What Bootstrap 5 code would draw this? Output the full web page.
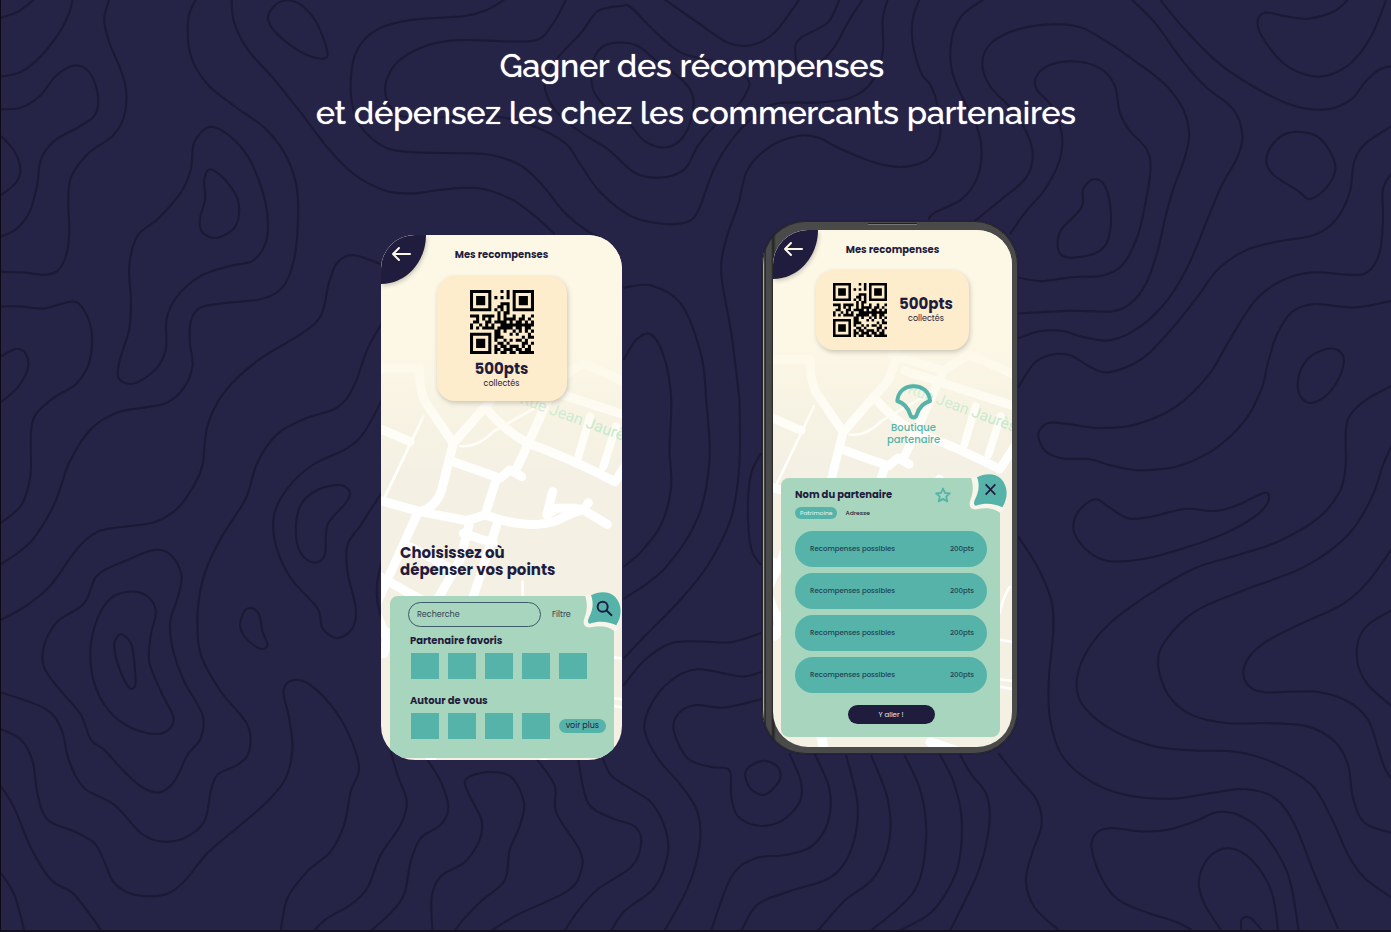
<!DOCTYPE html>
<html lang="fr">
<head>
<meta charset="utf-8">
<meta name="viewport" content="width=device-width, initial-scale=1">
<title>Gagner des récompenses</title>
<link href="https://cdn.jsdelivr.net/npm/bootstrap@5.3.0/dist/css/bootstrap.min.css" rel="stylesheet">
<style>
:root{--navy:#252346;--ink:#1f1c3d;--line:#1b1934;--mint:#a7d5be;--teal:#55b3aa;--cream:#fdf8e6;--sand:#f4f0e3;--peach:#feedcc}
body{font-family:Poppins,Inter,sans-serif;background:var(--navy);color:var(--ink)}
.stage{min-height:100vh;border-left:1px solid #0b0a16;border-bottom:2px solid #11101f;isolation:isolate}
.contours{z-index:-1;fill:none;stroke:var(--line);stroke-width:2px}
.headline{font-family:Raleway,Lato,sans-serif;font-size:32px;line-height:47px;font-weight:500;padding-top:42px;margin-bottom:85px;color:#fff;text-shadow:0 0 1px #fff}
.phones{gap:140px;padding-left:7px}
.phone-plain{width:241px;min-height:525px;border-radius:34px;margin-top:14px}
.phone-frame{width:256px;padding:9px 6px 7px 11px;border-radius:44px;background:linear-gradient(90deg,#111 0,#d8d8d8 1px,#111 3px,#4a4a4a 4px,#4a4a4a 9px,#222 11px,#4a4a4a 14px);box-shadow:inset 0 0 0 1px #26262b,0 0 1px #000}
.phone-frame .phone-screen{min-height:517px;border-radius:35px}
.speaker{top:2px;left:106px;width:49px;height:2px;background:#777;border-top:1px solid #222}
.phone-screen{background:var(--sand);overflow:hidden;isolation:isolate}
.citymap{z-index:-1}
.back-btn{width:45px;height:49px;border:0;border-radius:0 0 100% 0;background:var(--ink);box-shadow:1px 2px 4px #0003;padding:0 0 12px 10px}
.corner-btn svg,.back-btn svg{display:block}
.screen-title{font-size:10px;line-height:16px;font-weight:700;padding:12px 0 8px;margin:0}
.pts-card{background:var(--peach);border-radius:18px;box-shadow:1px 2px 5px #0003}
.pts-tall{padding:14px 33px 11px;margin-top:5px}
.pts-tall svg{margin-bottom:6px}
.pts-wide{padding:13px 16px 13px 17px;gap:12px}
.pts-value{font-size:15px;line-height:18px;font-weight:700}
.pts-note{font-size:8px;line-height:12px}
.pick{font-size:15px;line-height:17px;font-weight:700;margin:0 0 18px 19px}
.panel{background:var(--mint);border-radius:8px}
.panel-a{margin:0 8px 2px 9px;padding:6px 8px 19px 18px;border-radius:8px 8px 0 0}
.panel-b{margin:0 12px 10px 8px;padding:9px 13px 13px 14px}
.corner-btn{top:-6px;right:-9px;width:40px;height:42px;border:0;padding:0;background:none}
.search-row{gap:11px}
.search-box{width:133px;height:25px;border:1px solid #3d5b69;border-radius:13px;background:none;font-size:8px;padding:0 8px;color:var(--ink)}
.search-box::placeholder{color:#33414f;opacity:1}
.mini-link{font-size:8px;line-height:12px;color:#33414f;text-decoration:none}
.sub{font-size:10px;line-height:14px;font-weight:700;margin:0}
.sub-near{padding-left:2px;margin:7px 0 5px}
.sub-far{padding-left:2px;margin:15px 0 5px}
.tiles{gap:9px;padding-left:3px}
.tile{width:28px;height:26px;background:var(--teal)}
.more-btn{border:0;border-radius:8px;background:var(--teal);font-size:8px;line-height:14px;padding:0 7px;color:var(--ink)}
.marker{color:var(--teal);font-size:10px;line-height:12px;font-weight:500;margin:34px 0 0 42px}
.marker svg{margin:0 auto 2px}
.star{margin-right:36px}
.tag{font-size:6px;line-height:12px;border-radius:6px;background:var(--teal);color:#e8f7f0;padding:0 5px}
.addr{font-size:6px;line-height:12px;font-weight:500}
.rewards{gap:6px;margin-top:12px}
.reward{height:36px;border-radius:18px;background:var(--teal);font-size:7px;padding:0 13px 0 15px;color:#1f3f52;font-weight:500}
.go-btn{width:87px;height:19px;border:0;border-radius:10px;background:var(--ink);color:#e9e7f0;font-size:7px;line-height:19px;padding:0;margin-top:12px}
</style>
</head>
<body>
<svg width="0" height="0" class="position-absolute" aria-hidden="true">
  <defs>
    <linearGradient id="fade" x1="0" y1="0" x2="0" y2="1">
      <stop offset="0" stop-color="#fdf8e6"/><stop offset=".2" stop-color="#fdf8e6"/><stop offset=".46" stop-color="#fbf7e4" stop-opacity="0"/>
    </linearGradient>
    <symbol id="city" viewBox="0 0 260 560">
      <g transform="scale(.33333) translate(-33 495)" fill="none" stroke="#fff" stroke-width="27" stroke-linecap="round" stroke-linejoin="round">
        <path d="M20-95H150Q145-40 165 5L250 130L390-30L420-110M20 82L120 125M345 20Q400 90 475 130L560-60M475 130Q600 175 735 245L790 160M475 130L440 205M440-60L780 50M400-110L560-60L640-110L820-30"/>
        <path d="M625 170L660 50M700 200L738 80" stroke-width="24"/>
        <path d="M250 130L215 270Q200 320 150 335L25 300M250 185L390 235L420 210L455 230M380 235L345 345M150 335L290 362L345 345L400 362Q500 385 560 362Q600 340 640 330L712 373M548 275L530 345L560 325H620L640 330L655 308M145 335L20 610M300 365L270 480L190 620M385 362L300 620M120 440L240 505M280 400L370 430M30 530L190 620M20 640L60 740"/>
        <path d="M60 700L40 760M180 1060L200 1160M520 1090L700 1150" stroke-width="30"/>
        <path d="M160 50L45 290M270 138Q320 145 370 95L510 15M458 545V620M735 690Q745 640 765 610M733 772L790 782M733 895L790 903M733 918L790 928" stroke-width="8"/>
      </g>
      <text transform="translate(138 168) rotate(20)" font-family="Roboto,sans-serif" font-size="16" fill="#a9e2c3">Rue Jean Jaurès</text>
      <rect width="260" height="525" fill="url(#fade)"/>
    </symbol>
    <symbol id="arrow" viewBox="0 0 20 16"><path d="M19 8H2M8 2L2 8L8 14" fill="none" stroke="#fdf8e6" stroke-width="2" stroke-linecap="round" stroke-linejoin="round"/></symbol>
    <symbol id="qr" viewBox="0 0 21 21"><path class="qr-cells" fill="#000"/></symbol>
    <symbol id="petal" viewBox="640 30 120 126">
      <path d="M646 46C655 75 652 95 643 118C638 137 650 146 668 141C690 136 715 138 733 152L748 138L664 44Z" fill="#f8f5eb"/>
      <path d="M664 46C688 33 718 33 736 50C758 74 758 106 740 136C715 124 690 121 660 131C652 128 655 118 660 108C670 88 672 66 664 46Z" fill="#55b3aa"/>
    </symbol>
  </defs>
</svg>

<main class="stage position-relative overflow-hidden">
  <svg class="contours position-absolute top-0 start-0 w-100 h-100" viewBox="0 0 1391 932" preserveAspectRatio="xMidYMid slice" aria-hidden="true"></svg>

  <h1 class="headline text-center">Gagner des récompenses&nbsp;<br>et dépensez les chez les commercants partenaires</h1>

  <div class="phones d-flex flex-wrap justify-content-center align-items-start">
    <section class="phone-plain phone-screen position-relative d-flex flex-column">
      <svg class="citymap position-absolute top-0 start-0" width="260" height="560" aria-hidden="true"><use href="#city"/></svg>
      <button class="back-btn position-absolute top-0 start-0" aria-label="Retour"><svg width="20" height="16"><use href="#arrow"/></svg></button>
      <h2 class="screen-title text-center">Mes recompenses</h2>
      <div class="pts-card pts-tall align-self-center text-center">
        <svg width="64" height="64" class="d-block" role="img" aria-label="QR code"><use href="#qr"/></svg>
        <div class="pts-value">500pts</div>
        <div class="pts-note">collectés</div>
      </div>
      <h3 class="pick mt-auto">Choisissez où<br>dépenser vos points</h3>
      <div class="panel panel-a position-relative">
        <button class="corner-btn position-absolute" aria-label="Rechercher"><svg width="40" height="42" viewBox="640 30 120 126"><use href="#petal" x="640" y="30" width="120" height="126"/><g fill="none" stroke="#1f1c3d" stroke-width="6"><circle cx="699" cy="80" r="15"/><path d="M710 91L727 107"/></g></svg></button>
        <div class="search-row d-flex align-items-center">
          <input class="search-box" type="search" placeholder="Recherche" aria-label="Recherche">
          <a class="mini-link" href="#filtre">Filtre</a>
        </div>
        <h4 class="sub sub-near">Partenaire favoris</h4>
        <div class="tiles d-flex"><div class="tile"></div><div class="tile"></div><div class="tile"></div><div class="tile"></div><div class="tile"></div></div>
        <h4 class="sub sub-far">Autour de vous</h4>
        <div class="tiles d-flex align-items-center"><div class="tile"></div><div class="tile"></div><div class="tile"></div><div class="tile"></div><button class="more-btn text-nowrap">voir plus</button></div>
      </div>
    </section>

    <section class="phone-frame position-relative">
      <span class="speaker position-absolute"></span>
      <div class="phone-screen position-relative d-flex flex-column">
        <svg class="citymap position-absolute top-0 start-0" width="252" height="543" aria-hidden="true"><use href="#city"/></svg>
        <button class="back-btn position-absolute top-0 start-0" aria-label="Retour"><svg width="20" height="16"><use href="#arrow"/></svg></button>
        <h2 class="screen-title text-center">Mes recompenses</h2>
        <div class="pts-card pts-wide align-self-center d-flex align-items-center text-center mt-1">
          <svg width="54" height="54" role="img" aria-label="QR code"><use href="#qr"/></svg>
          <div><div class="pts-value">500pts</div><div class="pts-note">collectés</div></div>
        </div>
        <div class="marker text-center">
          <svg class="d-block" width="37" height="36" viewBox="414 43 112 108"><path d="M421 94C423 66 443 49 470 49C497 49 518 66 520 94C496 101 486 116 480 135C477 147 463 147 460 135C454 116 444 101 421 94Z" fill="none" stroke="#55b3aa" stroke-width="12" stroke-linejoin="round"/></svg>
          Boutique<br>partenaire
        </div>
        <div class="panel panel-b position-relative mt-auto">
          <button class="corner-btn position-absolute" aria-label="Fermer"><svg width="40" height="42" viewBox="640 30 120 126"><use href="#petal" x="640" y="30" width="120" height="126"/><path d="M690 67L719 98M719 67L690 98" stroke="#1f1c3d" stroke-width="5"/></svg></button>
          <div class="d-flex align-items-center">
            <h3 class="sub">Nom du partenaire</h3>
            <svg class="star ms-auto" width="16" height="16" viewBox="0 0 16 16"><path d="M8 1.500L10 6L14.800 6.400L11.200 9.600L12.300 14.400L8 11.900L3.700 14.400L4.800 9.600L1.200 6.400L6 6Z" fill="none" stroke="#55b3aa" stroke-width="1.800" stroke-linejoin="round"/></svg>
          </div>
          <div class="d-flex gap-2 mt-1"><span class="tag">Patrimoine</span><span class="addr">Adresse</span></div>
          <div class="rewards d-flex flex-column">
            <div class="reward d-flex align-items-center justify-content-between"><span>Recompenses possibles</span><span>200pts</span></div>
            <div class="reward d-flex align-items-center justify-content-between"><span>Recompenses possibles</span><span>200pts</span></div>
            <div class="reward d-flex align-items-center justify-content-between"><span>Recompenses possibles</span><span>200pts</span></div>
            <div class="reward d-flex align-items-center justify-content-between"><span>Recompenses possibles</span><span>200pts</span></div>
          </div>
          <button class="go-btn d-block mx-auto">Y aller !</button>
        </div>
      </div>
    </section>
  </div>
</main>

<script src="https://cdn.jsdelivr.net/npm/bootstrap@5.3.0/dist/js/bootstrap.bundle.min.js"></script>
<script>
// Contour lines in third-of-a-pixel units, grouped by origin; a trailing "z" closes a loop.
const contours = [
 {x:0,y:0,lines:`0,55 50,38 100,0
0,232 60,218 120,170 175,100 205,40 215,0
0,330 60,325 115,292 160,235 205,203 245,203 275,235 292,300 280,350 235,382 160,425 120,480 108,560 85,640 45,690 0,712
325,0 310,60 325,130 355,200 375,270 370,350 335,410 265,460 212,530 202,600 205,700 195,770 170,815 130,827 70,820 0,818
0,410 40,455 58,510 45,550 0,588
0,922 60,922 130,928 215,907 250,935 272,1000 265,1090 225,1155 160,1195 105,1245 90,1300 90,1400 85,1450 60,1520 0,1572
0,1072 45,1050 75,1065 80,1110 50,1165 0,1210
585,0 562,60 570,170 620,255 700,320 790,385 850,460 885,550 892,650 880,780 845,865 780,900 680,911 600,925 570,965 567,1030 575,1100 550,1165 500,1210 440,1224 350,1240 270,1290 205,1390 160,1515 90,1628 0,1696
692,0 700,70 740,150 820,240 900,340 980,445 1060,525 1150,573 1230,583 1310,573 1392,566 1452,570 1532,600 1602,650 1662,705
860,3 905,20 950,75 980,160 960,178 900,158 830,105 802,60 820,20 z
1512,0 1462,30 1392,50 1230,62 1130,90 1070,150 1050,240 1060,340 1095,400 1160,447 1240,459 1392,462 1472,467 1562,500 1627,560 1692,640 1752,690 1812,725
1697,0 1652,80 1592,125 1392,122 1290,135 1200,180 1160,235 1155,290 1180,335 1230,355 1390,352 1490,352 1592,378 1692,430 1742,500 1800,580 1890,650 1980,673 2060,668 2095,630 2140,510 2195,420 2262,350 2330,312 2450,310 2552,295 2617,245 2647,160 2647,60 2662,0
625,383 680,405 740,470 780,560 800,650 795,730 755,785 690,800 600,830 530,890 497,960 495,1050 465,1110 400,1153 355,1140 355,1090 385,990 390,900 385,800 410,710 470,660 540,580 570,510 580,430 z
630,510 680,550 713,610 705,680 650,716 605,700 597,660 613,600 610,540 z
0,1863 80,1818 150,1758 230,1648 290,1598 370,1583 460,1570 530,1528 580,1458 605,1398 620,1280 670,1180 770,1085 900,1005 960,950 985,850 1010,790 1060,768 1145,797
1145,970 1100,1050 1060,1160 1010,1225 910,1260 830,1305 770,1390 735,1498 660,1618 610,1728 590,1848 600,1968 660,2078 740,2178 745,2258 710,2298 650,2328 630,2378 610,2468 550,2518 480,2528 420,2503 340,2418 250,2368 205,2288 180,2188 130,2128 0,2081
1145,1200 1090,1300 1035,1350 935,1398 860,1468 820,1548 825,1638 870,1738 950,1828 965,1888 1010,1918 1055,1888 1065,1828 1040,1718 1040,1638 1080,1578 1145,1478`},
 {x:464,y:0,lines:`470,20 500,25 570,95 650,160 760,190 850,240 840,290 800,340 750,380 700,440 660,510 590,535 510,520 430,450 350,400 270,330 240,250 280,175 350,100 400,35 z
455,130 520,140 570,180 650,240 685,290 680,360 650,420 600,445 540,425 490,370 430,330 385,270 385,190 410,145 z
600,0 700,70 790,130 860,138 930,100 1005,0
1125,0 1090,70 1010,115 992,150 1005,200 1050,200 1105,150 1150,70 1195,0
1365,0 1345,60 1345,130 1370,220 1400,260 1420,320 1428,400 1412,455 1380,487 1310,503 1230,490 1130,450 1060,415 1000,410 920,440 850,510 820,620 785,720 770,820 800,1000 825,1200`},
 {x:928,y:0,lines:`165,0 100,50 70,120 70,210 100,290 145,380 160,460 145,540 100,600 20,640 0,660
140,665 220,600 290,540 313,480 300,410 250,330 185,260 162,190 190,130 270,90 375,75 460,85 540,130 620,185 710,255 765,330 783,410 765,490 735,570 710,660 690,750 655,850 610,910 550,937 430,935 270,943
245,705 290,640 350,570 395,480 400,400 370,320 325,270 325,230 370,195 450,187 520,210 560,260 575,340 605,395 655,450 667,510 650,620 625,720 580,800 520,830 430,834 340,846 270,835
495,540 530,560 548,640 540,720 510,758 440,775 400,768 388,735 400,690 460,625 465,570 z
610,0 680,70 760,180 830,260 915,330 943,410 925,480 880,560 830,680 780,800 720,900 640,980 550,1023 470,1015 400,995 330,997 270,1018
695,0 770,90 870,190 990,270 1100,320 1200,330 1270,300 1310,250 1350,213 1392,200
1260,0 1220,35 1140,58 1070,50 1010,40 988,70 1010,125 1070,195 1140,228 1200,228 1270,190 1330,110 1375,0
1115,398 1165,410 1205,455 1222,510 1195,565 1145,600 1110,575 1040,530 1015,490 1030,440 1070,405 z
1392,380 1310,435 1278,490 1265,580 1225,660 1160,707 1050,727 950,755 870,810 810,890 730,990 640,1080 540,1120 480,1100 430,1070 380,1065 320,1090 270,1165
1392,520 1365,570 1365,660 1355,760 1320,818 1270,827 1150,820 1060,845 980,905 900,1030 840,1130 740,1225 620,1277 510,1287 420,1275 360,1272 330,1305 350,1355 400,1378 480,1380 540,1397 620,1413 700,1410 765,1397 860,1350 950,1265 1000,1170 1020,1090 1045,1010 1090,940 1160,915 1280,925 1392,905
1210,1048 1245,1070 1240,1120 1200,1185 1145,1212 1112,1180 1115,1120 1150,1070 z
1392,1160 1310,1205 1260,1260 1253,1330 1253,1398 1235,1478 1170,1558 1050,1628 930,1668 800,1708 660,1788 540,1878 470,1968 445,2058 470,2128 560,2198 680,2243 800,2255 930,2260 1040,2293 1150,2358 1210,2458 1260,2568 1310,2638 1392,2698`},
 {x:928,y:466,lines:`1392,-60 1365,0 1330,100 1260,210 1130,305 950,375 800,440 710,530 690,600 720,690 790,750 900,775 1030,775 1140,785 1220,830 1260,900 1275,1000 1310,1075 1392,1105
1392,250 1320,350 1240,420 1100,485 1000,540 950,600 955,655 1010,682 1160,680 1260,710 1320,765 1350,850 1370,910 1392,945
1392,435 1320,480 1290,530 1290,600 1320,660 1392,725
500,103 540,125 600,160 670,155 770,132 860,138 930,120 1010,83 1020,110 980,155 880,210 750,255 640,283 540,288 480,260 437,200 450,140 z
270,215 330,310 370,410 375,500 362,640 365,760 400,870 480,945 590,990 730,1002 850,985 950,973 1040,1000 1100,1080 1160,1230 1230,1392
35,870 75,950 100,1060 90,1200 50,1290 0,1350 -90,1400
95,870 130,930 175,990 183,1080 150,1220 65,1398
210,865 270,940 325,1005 340,1080 310,1170 293,1250 320,1330 390,1395
1112,1398 1080,1230 1010,1110 940,1055 870,1042 800,1070 720,1095 640,1100 550,1090 505,1105 490,1150 520,1240 570,1305 660,1345 740,1370 790,1395
1050,1398 1030,1280 970,1185 900,1150 840,1180 812,1250 830,1320 880,1398
940,1398 940,1365 965,1358 1000,1395`},
 {x:0,y:466,lines:`1020,60 1048,85 1030,120 980,180 972,270 940,293 900,265 885,200 900,120 950,75 z
1145,280 1130,350 1130,410 1145,470
755,430 775,450 785,500 800,540 780,552 740,525 718,485 730,440 z
460,255 510,270 542,330 530,400 508,470 515,550 550,650 605,750 600,820 560,870 520,950 475,983 420,965 360,910 310,855 270,825 240,750 190,690 130,610 130,540 170,470 250,415 290,330 380,285 z
390,380 440,395 465,440 450,510 445,590 480,680 518,760 490,803 420,800 340,755 285,670 268,560 290,460 330,400 z
360,508 390,535 400,590 403,660 385,668 355,610 340,540 z
0,793 60,825 95,890 110,990 140,1065 220,1100 280,1135 310,1190 340,1255 400,1290 490,1290 550,1250 620,1165 720,1080 800,1010 855,940 875,850 865,760 848,680 870,648 920,655 990,720 1045,810 1075,910 1050,980 1030,1080 990,1160 920,1220 860,1300 840,1398
0,965 40,1030 90,1150 150,1245 220,1290 300,1395
0,1225 40,1290 70,1398
1170,860 1190,930 1218,1010 1200,1080 1140,1170 1100,1270 1050,1320 980,1360 940,1398
1280,885 1320,950 1343,1030 1320,1080 1260,1120 1230,1190 1210,1290 1165,1350 1110,1398`},
 {x:464,y:400,k:1.018,lines:`477,-115 515,-175 560,-190 600,-120 620,0 615,150 620,260 590,370 530,450 477,495
477,-328 560,-335 650,-280 710,-130 725,0 735,180 700,350 600,500 477,590
825,0 825,190 800,350 730,490 640,600 550,690 477,765
890,160 860,220 850,320 860,440 890,490
477,845 540,770 620,720 710,715 800,717 890,690
890,805 830,818 700,797 620,830 560,900 540,975 580,1060 650,1140 700,1220 705,1320 670,1440 600,1568
890,885 780,910 690,903 640,930 628,980 670,1060 740,1085 795,1095 800,1170 820,1230 880,1258 950,1245 1005,1190 1010,1130 975,1045
895,1067 940,1085 945,1125 900,1167 855,1145 845,1095 z
1050,1045 1095,1150 1090,1250 1040,1320 960,1345 870,1355 800,1410 740,1568
1145,1050 1180,1200 1160,1330 1100,1410 980,1450 880,1490 830,1568
1220,1050 1270,1180 1275,1300 1230,1410 1140,1480 1060,1568
1320,1050 1370,1160 1385,1300 1350,1450 1220,1568
415,1060 440,1110 500,1150 560,1190 600,1260 610,1340 570,1440 480,1510 440,1568
340,1060 370,1190 440,1235 510,1260 530,1310 500,1380 400,1445 340,1510 300,1568
215,1060 270,1140 275,1220 345,1330 350,1390 310,1450 160,1520 80,1568
-97,1568 -99,1468 -72,1408 0,1365 45,1300 50,1240 10,1160 5,1120 70,1100 140,1115 178,1190 165,1260 135,1330 120,1420 50,1480 0,1530 -30,1568`}
];
function smooth(line, ox, oy, k) {
  const closed = line.endsWith('z');
  const p = line.replace(' z', '').trim().split(' ').map(s => s.split(',').map(Number)).map(([x, y]) => [x / 3 + ox, y * k / 3 + oy]);
  const n = p.length, at = i => closed ? p[(i + n) % n] : p[Math.max(0, Math.min(n - 1, i))];
  let d = `M${p[0]}`;
  for (let i = 0; i < (closed ? n : n - 1); i++) {
    const [a, b, c, e] = [at(i - 1), at(i), at(i + 1), at(i + 2)];
    d += `C${b[0] + (c[0] - a[0]) / 6},${b[1] + (c[1] - a[1]) / 6} ${c[0] - (e[0] - b[0]) / 6},${c[1] - (e[1] - b[1]) / 6} ${c}`;
  }
  return d;
}
const path = document.createElementNS('http://www.w3.org/2000/svg', 'path');
path.setAttribute('d', contours.flatMap(g => g.lines.split('\n').map(l => smooth(l, g.x, g.y, g.k || 1))).join(''));
document.querySelector('.contours').append(path);

const qr = `111111100010101111111
100000100000101000001
101110101010101011101
101110100000001011101
101110100011101011101
100000100110101000001
111111101010101111111
000000000101100000000
111011110101001001001
001010100101111011010
011001101111010110101
100101010011111111111
101011110111110110110
000000001101001010101
111111101100010100010
100000101110000001011
101110101001010110100
101110100110100001101
101110101011011101010
100000101101110110110
111111101011011011111`.split('\n');
document.querySelector('.qr-cells').setAttribute('d', qr.flatMap((r, y) => [...r].map((c, x) => c === '1' ? `M${x} ${y}h1v1h-1z` : '')).join(''));
</script>
</body>
</html>
